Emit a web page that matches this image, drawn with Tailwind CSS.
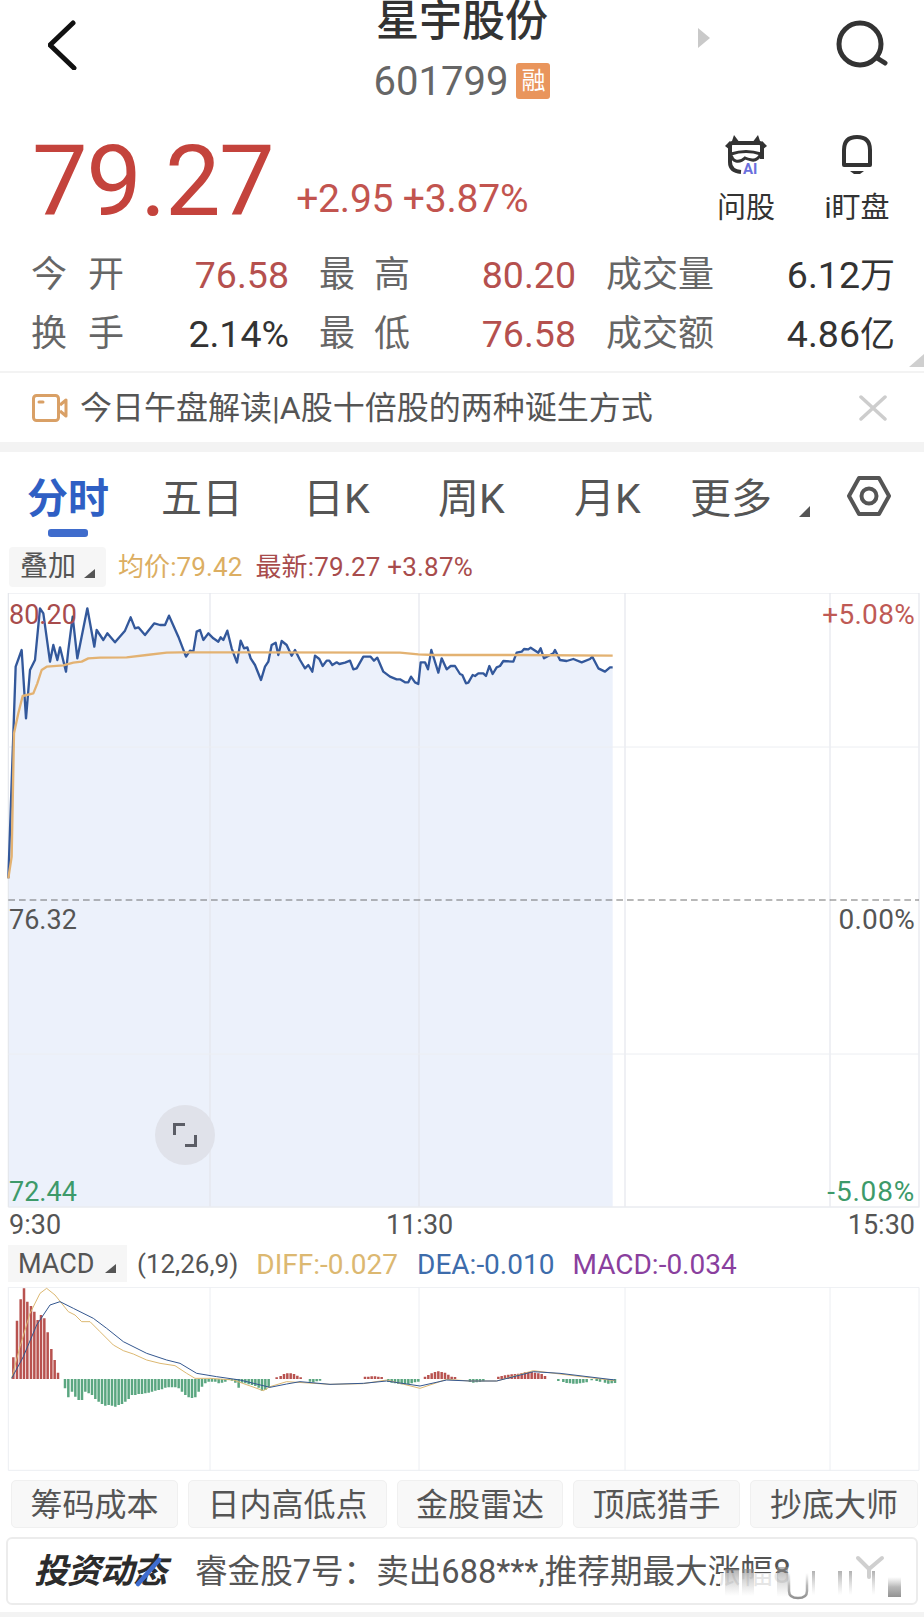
<!DOCTYPE html>
<html lang="zh">
<head>
<meta charset="utf-8">
<title>星宇股份</title>
<script src="https://cdn.jsdelivr.net/npm/@tailwindcss/browser@4"></script>
</head>
<body class="bg-white">
<div class="w-[924px] h-[1617px] overflow-hidden bg-white text-[#555] font-['Roboto','Noto_Sans_CJK_SC',sans-serif]">

  <!-- header -->
  <header class="h-[116px] grid grid-cols-[1fr_auto_1fr]">
    <div class="pl-[48px] pt-[20px]">
      <svg width="32" height="50" viewBox="0 0 32 50" fill="none" stroke="#111" stroke-width="5" stroke-linecap="round" stroke-linejoin="round"><path d="M25 3 L2 25 L26 48"/></svg>
    </div>
    <div class="flex flex-col items-center">
      <div class="h-[42px] text-[43px] leading-[42px] font-medium text-[#333]">星宇股份</div>
      <div class="mt-[20px] flex items-center gap-[8px]">
        <span class="text-[40px] leading-[40px] text-[#666]">601799</span>
        <span class="-mt-[2px] w-[34px] h-[36px] rounded-[3px] bg-[#e9955c] text-white text-[24px] leading-[36px] text-center">融</span>
      </div>
    </div>
    <div class="flex justify-between pl-[148px] pr-[36px] pt-[20px]">
      <svg class="mt-[8px]" width="12" height="20" viewBox="0 0 12 20"><polygon points="0,0 12,10 0,20" fill="#c9c9c9"/></svg>
      <svg width="52" height="50" viewBox="0 0 52 50" fill="none" stroke="#333" stroke-width="5" stroke-linecap="round"><circle cx="24" cy="24" r="21"/><path d="M41 38 L49 43"/></svg>
    </div>
  </header>

  <!-- price row -->
  <section class="h-[130px] flex pl-[32px] pr-[32px]">
    <div class="pt-[9px] text-[99px] leading-[112px] tracking-[-1.5px] text-[#c4433c]">79.27</div>
    <div class="ml-[23px] pt-[61px] text-[39px] leading-[44px] tracking-[-0.2px] text-[#c2544f] whitespace-nowrap">+2.95 +3.87%</div>
    <div class="ml-auto flex gap-[41px] pt-[19px]">
      <div class="w-[70px] flex flex-col items-center">
        <svg width="42" height="42" viewBox="0 0 42 42" fill="none">
          <polygon points="6,9 9,0 15,8" fill="#333"/><polygon points="27,8 33,0 36,9" fill="#333"/>
          <polygon points="0,11 5,6 5,15" fill="#333"/><polygon points="37,6 42,11 37,15" fill="#333"/>
          <path d="M5 10 Q5 8 8 8 H34 Q37 8 37 10 V24 M5 10 V27 Q5 36 16 37" stroke="#333" stroke-width="4"/>
          <path d="M6 19 Q21 14 36 19 Q32 26 27 25 Q22 24 20 23 Q16 27 11 26 Q7 25 6 19Z" stroke="#333" stroke-width="3" fill="#fff"/>
          <text x="18" y="39" font-size="15" font-weight="700" fill="#6a70dd" font-family="Roboto">AI</text>
        </svg>
        <span class="mt-[13px] text-[29px] leading-[36px] text-[#333]">问股</span>
      </div>
      <div class="w-[70px] flex flex-col items-center">
        <svg width="32" height="42" viewBox="0 0 32 42" fill="none" stroke="#333" stroke-width="4" stroke-linejoin="round"><path d="M3 30 V15 Q3 2 16 2 Q29 2 29 15 V30 Z"/><path d="M9 36 H23 L19 39 H13 Z" fill="#333" stroke="none"/></svg>
        <span class="mt-[13px] text-[29px] leading-[36px] text-[#333] whitespace-nowrap">i盯盘</span>
      </div>
    </div>
  </section>

  <!-- stats -->
  <section class="relative h-[125px] pl-[31px]">
    <div class="h-[59px] flex items-center text-[37.5px] leading-[59px] whitespace-nowrap">
      <span class="w-[93px] flex justify-between text-[#666] text-[36px]"><span>今</span><span>开</span></span>
      <span class="w-[165px] text-right text-[#b5504e]">76.58</span>
      <span class="ml-[30px] w-[91px] flex justify-between text-[#666] text-[36px]"><span>最</span><span>高</span></span>
      <span class="w-[166px] text-right text-[#b5504e]">80.20</span>
      <span class="ml-[30px] w-[109px] text-[#666] text-[36px]">成交量</span>
      <span class="w-[180px] text-right text-[#333]">6.12<span class="text-[35px]">万</span></span>
    </div>
    <div class="h-[59px] flex items-center text-[37.5px] leading-[59px] whitespace-nowrap">
      <span class="w-[93px] flex justify-between text-[#666] text-[36px]"><span>换</span><span>手</span></span>
      <span class="w-[165px] text-right text-[#333]">2.14%</span>
      <span class="ml-[30px] w-[91px] flex justify-between text-[#666] text-[36px]"><span>最</span><span>低</span></span>
      <span class="w-[166px] text-right text-[#b5504e]">76.58</span>
      <span class="ml-[30px] w-[109px] text-[#666] text-[36px]">成交额</span>
      <span class="w-[180px] text-right text-[#333]">4.86<span class="text-[35px]">亿</span></span>
    </div>
    <svg class="absolute right-0 bottom-[4px]" width="15" height="13" viewBox="0 0 15 13"><polygon points="0,13 15,13 15,0" fill="#cfcfcf"/></svg>
  </section>

  <!-- banner -->
  <section class="h-[71px] border-t-2 border-[#f3f3f3] flex items-center pl-[32px] pr-[37px]">
    <svg width="36" height="28" viewBox="0 0 36 28" fill="none" stroke="#d9a066" stroke-width="3"><rect x="1.5" y="1.5" width="25" height="25" rx="3"/><path d="M7 8 H11" stroke-linecap="round"/><path d="M28 11 L34 6 V22 L28 17" stroke-linejoin="round"/></svg>
    <span class="ml-[12px] text-[32px] leading-[40px] text-[#555] whitespace-nowrap">今日午盘解读|A股十倍股的两种诞生方式</span>
    <svg class="ml-auto" width="28" height="26" viewBox="0 0 28 26" stroke="#cdcdcd" stroke-width="3.5" stroke-linecap="round"><path d="M2 2 L26 24 M26 2 L2 24"/></svg>
  </section>
  <div class="h-[10px] bg-[#f3f3f3]"></div>

  <!-- tabs -->
  <nav class="relative h-[95px] text-[41px] leading-[50px] text-[#555] whitespace-nowrap">
    <div class="flex pt-[22px]">
      <span class="ml-[27px] w-[82px] font-bold text-[#2f5fc4]">分时</span>
      <span class="ml-[52px] w-[80px]">五日</span>
      <span class="ml-[62px] w-[66px]">日K</span>
      <span class="ml-[69px] w-[68px]">周K</span>
      <span class="ml-[68px] w-[68px]">月K</span>
      <span class="ml-[48px] w-[85px]">更多</span>
      <svg class="ml-[24px] mt-[32px]" width="11" height="11" viewBox="0 0 11 11"><polygon points="0,11 11,11 11,0" fill="#555"/></svg>
      <svg class="ml-[37px] mt-[1px]" width="44" height="42" viewBox="0 0 44 42" fill="none" stroke="#555" stroke-width="4" stroke-linejoin="round"><path d="M2 21 L12 3 H32 L42 21 L32 39 H12 Z"/><circle cx="22" cy="21" r="7.5"/></svg>
    </div>
    <div class="absolute left-[48px] top-[77px] w-[40px] h-[8px] rounded-[3px] bg-[#3f6ccc]"></div>
  </nav>

  <!-- legend -->
  <div class="h-[40px] flex items-center whitespace-nowrap">
    <div class="ml-[9px] w-[97px] h-[40px] rounded-[4px] bg-[#f6f6f6] flex items-center pl-[11px] text-[28px] text-[#555]">
      <span>叠加</span>
      <svg class="ml-[8px] mt-[12px]" width="11" height="9" viewBox="0 0 11 9"><polygon points="0,9 11,9 11,0" fill="#555"/></svg>
    </div>
    <span class="ml-[12px] text-[26px] tracking-[0.1px] text-[#dcae62]">均价:79.42</span>
    <span class="ml-[13px] text-[26px] tracking-[0.2px] text-[#a84c4c]">最新:79.27 +3.87%</span>
  </div>

  <!-- main chart -->
  <div class="relative mt-[6px] h-[615px]">
    <svg class="block" width="924" height="615" viewBox="0 1779 2772 1845" fill="none">
      <g transform="translate(0,1770)">
        <polygon fill="#ecf1fb" points="25,1851 25,865 47,230 65,180 78,385 90,240 105,210 120,55 130,70 150,215 160,165 172,210 180,172 198,245 205,180 218,80 232,205 262,55 283,170 290,120 310,150 322,130 345,157 375,122 392,82 405,115 415,112 435,135 463,100 480,105 495,105 507,77 535,140 558,200 570,182 580,185 590,125 600,120 610,150 625,130 640,145 655,155 662,142 670,150 682,122 695,175 711,218 722,152 732,175 742,172 752,205 765,225 783,270 795,230 805,215 815,165 827,158 835,195 845,153 860,165 875,197 885,180 900,210 915,235 925,225 937,245 945,197 958,207 968,228 980,212 988,212 997,225 1010,217 1018,222 1035,218 1050,212 1060,238 1070,235 1090,200 1112,200 1122,212 1132,203 1150,245 1170,260 1190,268 1200,268 1215,277 1225,277 1233,260 1245,277 1255,282 1262,217 1275,217 1284,238 1294,180 1315,248 1325,205 1340,238 1352,228 1365,228 1380,252 1387,255 1398,280 1405,278 1418,255 1425,258 1435,250 1450,250 1458,258 1468,228 1478,252 1490,232 1500,228 1510,213 1540,215 1550,188 1565,185 1572,177 1585,178 1592,173 1615,188 1622,175 1632,205 1660,190 1665,180 1680,210 1700,213 1720,207 1745,217 1770,207 1777,200 1795,235 1815,245 1830,232 1838,232 1838,1851"/>
        <!-- grid -->
        <path stroke="#e4e6ec" stroke-width="3.5" d="M25 9 H2757 V1851 H25 M25 9 V1851 M630 9 V1851 M1257 9 V1851 M1875 9 V1851 M2490 9 V1851"/>
        <path stroke="#eceef2" stroke-width="3" d="M25 471 H2757 M25 1392 H2757 M25 1851 H2757"/>
        <path stroke="#555" stroke-width="2.5" stroke-dasharray="20 12" d="M25 930 H2757"/>
        <polyline stroke="#33589b" stroke-width="7" stroke-linejoin="round" points="25,865 47,230 65,180 78,385 90,240 105,210 120,55 130,70 150,215 160,165 172,210 180,172 198,245 205,180 218,80 232,205 262,55 283,170 290,120 310,150 322,130 345,157 375,122 392,82 405,115 415,112 435,135 463,100 480,105 495,105 507,77 535,140 558,200 570,182 580,185 590,125 600,120 610,150 625,130 640,145 655,155 662,142 670,150 682,122 695,175 711,218 722,152 732,175 742,172 752,205 765,225 783,270 795,230 805,215 815,165 827,158 835,195 845,153 860,165 875,197 885,180 900,210 915,235 925,225 937,245 945,197 958,207 968,228 980,212 988,212 997,225 1010,217 1018,222 1035,218 1050,212 1060,238 1070,235 1090,200 1112,200 1122,212 1132,203 1150,245 1170,260 1190,268 1200,268 1215,277 1225,277 1233,260 1245,277 1255,282 1262,217 1275,217 1284,238 1294,180 1315,248 1325,205 1340,238 1352,228 1365,228 1380,252 1387,255 1398,280 1405,278 1418,255 1425,258 1435,250 1450,250 1458,258 1468,228 1478,252 1490,232 1500,228 1510,213 1540,215 1550,188 1565,185 1572,177 1585,178 1592,173 1615,188 1622,175 1632,205 1660,190 1665,180 1680,210 1700,213 1720,207 1745,217 1770,207 1777,200 1795,235 1815,245 1830,232 1838,232"/>
        <polyline stroke="#e3b272" stroke-width="7" stroke-linejoin="round" points="25,865 35,800 42,430 55,370 68,318 100,310 112,280 125,240 140,230 190,226 220,218 245,215 265,205 300,203 380,202 440,195 500,188 540,187 1200,188 1255,193 1300,195 1540,195 1838,197"/>
      </g>
    </svg>
    <span class="absolute left-[9px] top-[6px] text-[27px] leading-[32px] text-[#a84c4c]">80.20</span>
    <span class="absolute right-[9px] top-[6px] text-[28px] leading-[32px] text-[#bf5a55] tracking-[0.3px]">+5.08%</span>
    <span class="absolute left-[9px] top-[311px] text-[27px] leading-[32px] text-[#555]">76.32</span>
    <span class="absolute right-[9px] top-[311px] text-[28px] leading-[32px] text-[#555] tracking-[0.3px]">0.00%</span>
    <span class="absolute left-[9px] top-[583px] text-[27px] leading-[32px] text-[#3d9a6a]">72.44</span>
    <span class="absolute right-[9px] top-[583px] text-[28px] leading-[32px] text-[#3d9a6a] tracking-[0.8px]">-5.08%</span>
    <div class="absolute left-[155px] top-[512px] w-[60px] h-[60px] rounded-full bg-[#e0e2ea] flex items-center justify-center">
      <svg width="24" height="24" viewBox="0 0 24 24" fill="none" stroke="#5b5d66" stroke-width="3"><path d="M1.5 12 V1.5 H12 M22.5 12 V22.5 H12"/></svg>
    </div>
  </div>

  <!-- time axis -->
  <div class="h-[37px] relative text-[27px] leading-[32px] text-[#555]">
    <span class="absolute left-[9px] top-[1px]">9:30</span>
    <span class="absolute left-[386px] top-[1px]">11:30</span>
    <span class="absolute right-[9px] top-[1px]">15:30</span>
  </div>

  <!-- macd legend -->
  <div class="h-[37px] flex items-center whitespace-nowrap text-[28px]">
    <div class="ml-[8px] w-[119px] h-[37px] bg-[#f6f6f6] flex items-center pl-[10px] text-[#555]">
      <span class="text-[27px] pt-[2px]">MACD</span>
      <svg class="ml-[10px] mt-[10px]" width="11" height="9" viewBox="0 0 11 9"><polygon points="0,9 11,9 11,0" fill="#555"/></svg>
    </div>
    <span class="ml-[10px] pt-[2px] text-[26px] text-[#555]">(12,26,9)</span>
    <span class="ml-[18px] pt-[2px] text-[#dcb871]">DIFF:-0.027</span>
    <span class="ml-[19px] pt-[2px] text-[#3d6cab]">DEA:-0.010</span>
    <span class="ml-[18px] pt-[2px] text-[#8a3f9e]">MACD:-0.034</span>
  </div>

  <!-- macd chart -->
  <svg class="block mt-[5px]" width="924" height="184" viewBox="0 261 2772 552" fill="none">
    <path stroke="#eceef2" stroke-width="3" d="M25 262 H2757 V811 H25 Z M630 262 V811 M1257 262 V811 M1875 262 V811 M2490 262 V811"/>
    <path stroke="#b8524f" stroke-width="7.5" d="M40 537V472M51 537V362M62 537V298M72 537V265M82 537V305M93 537V318M103 537V335M113 537V360M123 537V345M133 537V355M143 537V397M154 537V447M164 537V480M174 537V518M830 537V532M842 537V528M852 537V522M862 537V520M872 537V520M882 537V522M892 537V527M902 537V532M1095 537V530M1105 537V530M1115 537V529M1125 537V529M1135 537V530M1145 537V531M1275 537V530M1285 537V525M1295 537V520M1305 537V516M1315 537V514M1325 537V516M1335 537V518M1345 537V524M1355 537V530M1365 537V531M1495 537V530M1505 537V528M1515 537V526M1525 537V524M1535 537V523M1545 537V522M1555 537V521M1565 537V519M1575 537V517M1585 537V516M1595 537V516M1605 537V518M1615 537V520M1625 537V522M1635 537V528"/>
    <path stroke="#5aa680" stroke-width="7.5" d="M195 537V565M205 537V592M216 537V575M226 537V590M236 537V600M246 537V600M256 537V575M266 537V580M276 537V585M286 537V597M296 537V605M306 537V612M316 537V617M326 537V615M336 537V617M346 537V620M356 537V615M366 537V612M376 537V605M386 537V597M396 537V585M406 537V585M416 537V582M426 537V582M436 537V580M446 537V578M456 537V575M466 537V572M476 537V570M486 537V568M496 537V563M506 537V562M516 537V562M526 537V562M536 537V565M546 537V575M556 537V585M566 537V592M576 537V594M586 537V592M596 537V575M606 537V560M616 537V550M626 537V545M636 537V545M646 537V545M656 537V550M666 537V548M676 537V545M686 537V540M696 537V542M706 537V548M716 537V563M726 537V548M736 537V550M746 537V553M756 537V555M766 537V558M776 537V563M786 537V572M796 537V570M806 537V562M930 537V545M940 537V547M950 537V544M960 537V542M1165 537V546M1175 537V548M1185 537V550M1195 537V552M1205 537V553M1215 537V553M1225 537V552M1235 537V550M1245 537V547M1255 537V545M1410 537V546M1420 537V548M1430 537V547M1440 537V546M1450 537V544M1675 537V543M1690 537V546M1700 537V549M1710 537V550M1720 537V551M1730 537V551M1740 537V550M1750 537V548M1760 537V547M1775 537V541M1790 537V543M1800 537V545M1815 537V548M1825 537V551M1835 537V550M1845 537V549"/>
    <polyline stroke="#dcb871" stroke-width="3" stroke-linejoin="round" points="35,535 60,440 90,340 120,280 140,265 165,285 205,335 225,345 245,365 270,365 300,395 340,435 370,452 400,462 440,480 480,490 525,497 560,520 585,535 630,535 700,540 790,572 810,560 860,545 990,553 1090,551 1160,540 1260,565 1340,538 1410,543 1490,543 1600,512 1680,522 1845,542"/>
    <polyline stroke="#34578f" stroke-width="3" stroke-linejoin="round" points="35,535 70,470 110,375 150,315 180,305 220,325 280,355 320,385 370,425 440,460 500,480 540,490 590,520 650,530 720,540 810,562 860,552 900,545 990,553 1090,550 1160,543 1260,558 1340,540 1410,543 1490,543 1600,515 1680,520 1845,540"/>
  </svg>

  <!-- quick buttons -->
  <div class="mt-[9px] h-[48px] pl-[11px] flex gap-[10px] whitespace-nowrap text-[32px] text-[#555]">
    <div class="w-[167px] h-[48px] rounded-[5px] border border-[#f0f0f0] bg-[#f8f8f8] flex items-center justify-center pt-[2px]">筹码成本</div>
    <div class="w-[199px] h-[48px] rounded-[5px] border border-[#f0f0f0] bg-[#f8f8f8] flex items-center justify-center pt-[2px]">日内高低点</div>
    <div class="w-[166px] h-[48px] rounded-[5px] border border-[#f0f0f0] bg-[#f8f8f8] flex items-center justify-center pt-[2px]">金股雷达</div>
    <div class="w-[167px] h-[48px] rounded-[5px] border border-[#f0f0f0] bg-[#f8f8f8] flex items-center justify-center pt-[2px]">顶底猎手</div>
    <div class="w-[168px] h-[48px] rounded-[5px] border border-[#f0f0f0] bg-[#f8f8f8] flex items-center justify-center pt-[2px]">抄底大师</div>
  </div>

  <!-- news card -->
  <div class="relative mt-[9px] ml-[6px] w-[912px] h-[68px] rounded-[6px] border-2 border-[#ececec] flex items-center whitespace-nowrap">
    <span class="relative ml-[26px] w-[137px] text-[34px] font-bold italic text-[#2c2c2c] tracking-[-1px]">投资动态
      <svg class="absolute left-[100px] top-[11px]" width="28" height="30" viewBox="0 0 28 30"><path d="M25 3 L4 27" stroke="#3e6dd0" stroke-width="4.5" stroke-linecap="round"/></svg>
    </span>
    <span class="ml-[24px] w-[600px] overflow-hidden text-[32.6px] pt-[2px] text-[#555]">睿金股7号：卖出688***,推荐期最大涨幅8</span>
    <svg class="absolute left-0 top-0" width="908" height="64" viewBox="0 0 908 64" fill="none">
      <defs>
        <linearGradient id="smear" x1="0" y1="0" x2="0" y2="1"><stop offset="0" stop-color="#888" stop-opacity=".65"/><stop offset="1" stop-color="#aaa" stop-opacity="0"/></linearGradient>
        <linearGradient id="smear2" x1="0" y1="0" x2="0" y2="1"><stop offset="0" stop-color="#999" stop-opacity="0"/><stop offset=".5" stop-color="#888" stop-opacity=".6"/><stop offset="1" stop-color="#777" stop-opacity=".8"/></linearGradient>
      </defs>
      <rect x="712" y="34" width="85" height="28" fill="#fff" fill-opacity=".85"/>
      <rect x="717" y="30" width="14" height="27" fill="url(#smear)"/>
      <rect x="734" y="30" width="12" height="27" fill="url(#smear)"/>
      <rect x="769" y="28" width="11" height="30" fill="url(#smear)"/>
      <rect x="804" y="32" width="3" height="24" fill="url(#smear)"/>
      <rect x="830" y="32" width="4" height="24" fill="url(#smear)"/>
      <rect x="841" y="32" width="3" height="24" fill="url(#smear)"/>
      <rect x="864" y="32" width="3" height="24" fill="url(#smear)"/>
      <rect x="880" y="38" width="13" height="20" fill="url(#smear2)"/>
      <path d="M781 34 V52 Q781 59 790 59 Q799 59 799 52 V34" stroke="url(#smear2)" stroke-width="2.5"/>
      <path d="M850 19 L861 30 L874 19 M861 30 V38" stroke="#cfcfcf" stroke-width="4" stroke-linecap="round"/>
    </svg>
  </div>

  <div class="mt-[7px] h-[5px] bg-[#f3f3f3]"></div>
</div>
</body>
</html>
